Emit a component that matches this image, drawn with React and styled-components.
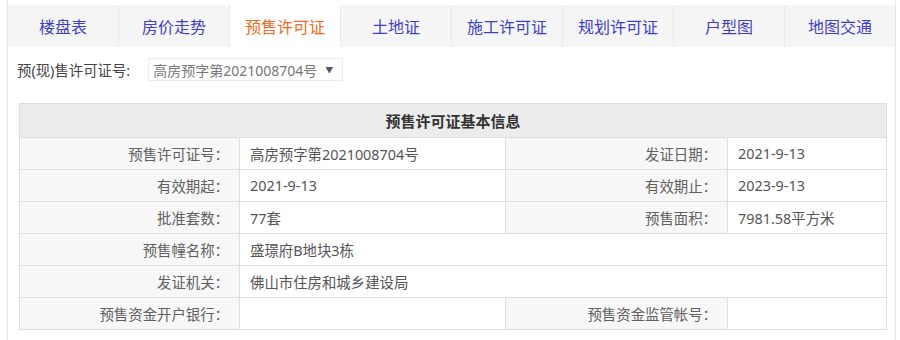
import React from "react";
import styled, { createGlobalStyle } from "styled-components";

const GlobalStyle = createGlobalStyle`
  html, body { margin: 0; padding: 0; background: #fff; }
  body { font-family: "Noto Sans", "Noto Sans CJK SC", sans-serif; }
`;

const Panel = styled.div`
  margin-left: 7px;
  width: 887px;
  border-left: 1px solid #e6e6e6;
  border-right: 1px solid #e6e6e6;
  padding-top: 5px;
  padding-bottom: 20px;
`;

const TabBar = styled.div`
  display: flex;
  height: 42px;
  background: #f5f5f5;
`;

const Tab = styled.div`
  flex: 1;
  display: flex;
  align-items: center;
  justify-content: center;
  font-size: 16px;
  color: ${(p) => (p.$active ? "#f2691c" : "#3f3fc6")};
  background: ${(p) => (p.$active ? "#fff" : "transparent")};
  border-right: 1px solid #e9e9e9;
  &:last-child { border-right: none; }
`;

const FilterRow = styled.div`
  display: flex;
  align-items: center;
  margin-top: 11px;
  height: 23px;
  padding-left: 9px;
  gap: 18px;
`;

const FilterLabel = styled.span`
  font-size: 14.4px;
  color: #444;
  white-space: nowrap;
`;

const Select = styled.div`
  display: flex;
  align-items: center;
  flex: none;
  height: 23px;
  width: 195px;
  box-sizing: border-box;
  border: 1px solid #ececec;
  padding: 0 4px;
  font-size: 14px;
  color: #777;
  gap: 8px;
  white-space: nowrap;
`;

const Caret = styled.span`
  font-size: 8px;
  color: #555;
`;

const Table = styled.table`
  margin: 22px 0 0 11px;
  width: 867px;
  border-collapse: collapse;
  table-layout: fixed;
  font-size: 14.4px;
`;

const HeadCell = styled.th`
  height: 33px;
  padding: 0;
  background: #ececec;
  border: 1px solid #dedede;
  font-size: 15px;
  font-weight: bold;
  color: #333;
  text-align: center;
`;

const Label = styled.td`
  height: 31px;
  padding: 0 10px 0 0;
  background: #f7f7f7;
  border: 1px solid #dedede;
  color: #606060;
  text-align: right;
  white-space: nowrap;
`;

const Value = styled.td`
  height: 31px;
  padding: 0 0 0 10px;
  background: #fff;
  border: 1px solid #dedede;
  color: #555;
  text-align: left;
  white-space: nowrap;
`;

const tabs = ["楼盘表", "房价走势", "预售许可证", "土地证", "施工许可证", "规划许可证", "户型图", "地图交通"];

export default function App() {
  return (
    <>
      <GlobalStyle />
      <Panel>
        <TabBar>
          {tabs.map((t) => (
            <Tab key={t} $active={t === "预售许可证"}>{t}</Tab>
          ))}
        </TabBar>
        <FilterRow>
          <FilterLabel>预(现)售许可证号:</FilterLabel>
          <Select>
            <span>高房预字第2021008704号</span>
            <Caret>▼</Caret>
          </Select>
        </FilterRow>
        <Table>
          <colgroup>
            <col style={{ width: 220 }} />
            <col style={{ width: 266 }} />
            <col style={{ width: 222 }} />
            <col style={{ width: 159 }} />
          </colgroup>
          <thead>
            <tr>
              <HeadCell colSpan={4}>预售许可证基本信息</HeadCell>
            </tr>
          </thead>
          <tbody>
            <tr>
              <Label>预售许可证号：</Label>
              <Value>高房预字第2021008704号</Value>
              <Label>发证日期：</Label>
              <Value>2021-9-13</Value>
            </tr>
            <tr>
              <Label>有效期起：</Label>
              <Value>2021-9-13</Value>
              <Label>有效期止：</Label>
              <Value>2023-9-13</Value>
            </tr>
            <tr>
              <Label>批准套数：</Label>
              <Value>77套</Value>
              <Label>预售面积：</Label>
              <Value>7981.58平方米</Value>
            </tr>
            <tr>
              <Label>预售幢名称：</Label>
              <Value colSpan={3}>盛璟府B地块3栋</Value>
            </tr>
            <tr>
              <Label>发证机关：</Label>
              <Value colSpan={3}>佛山市住房和城乡建设局</Value>
            </tr>
            <tr>
              <Label>预售资金开户银行：</Label>
              <Value></Value>
              <Label>预售资金监管帐号：</Label>
              <Value></Value>
            </tr>
          </tbody>
        </Table>
      </Panel>
    </>
  );
}
